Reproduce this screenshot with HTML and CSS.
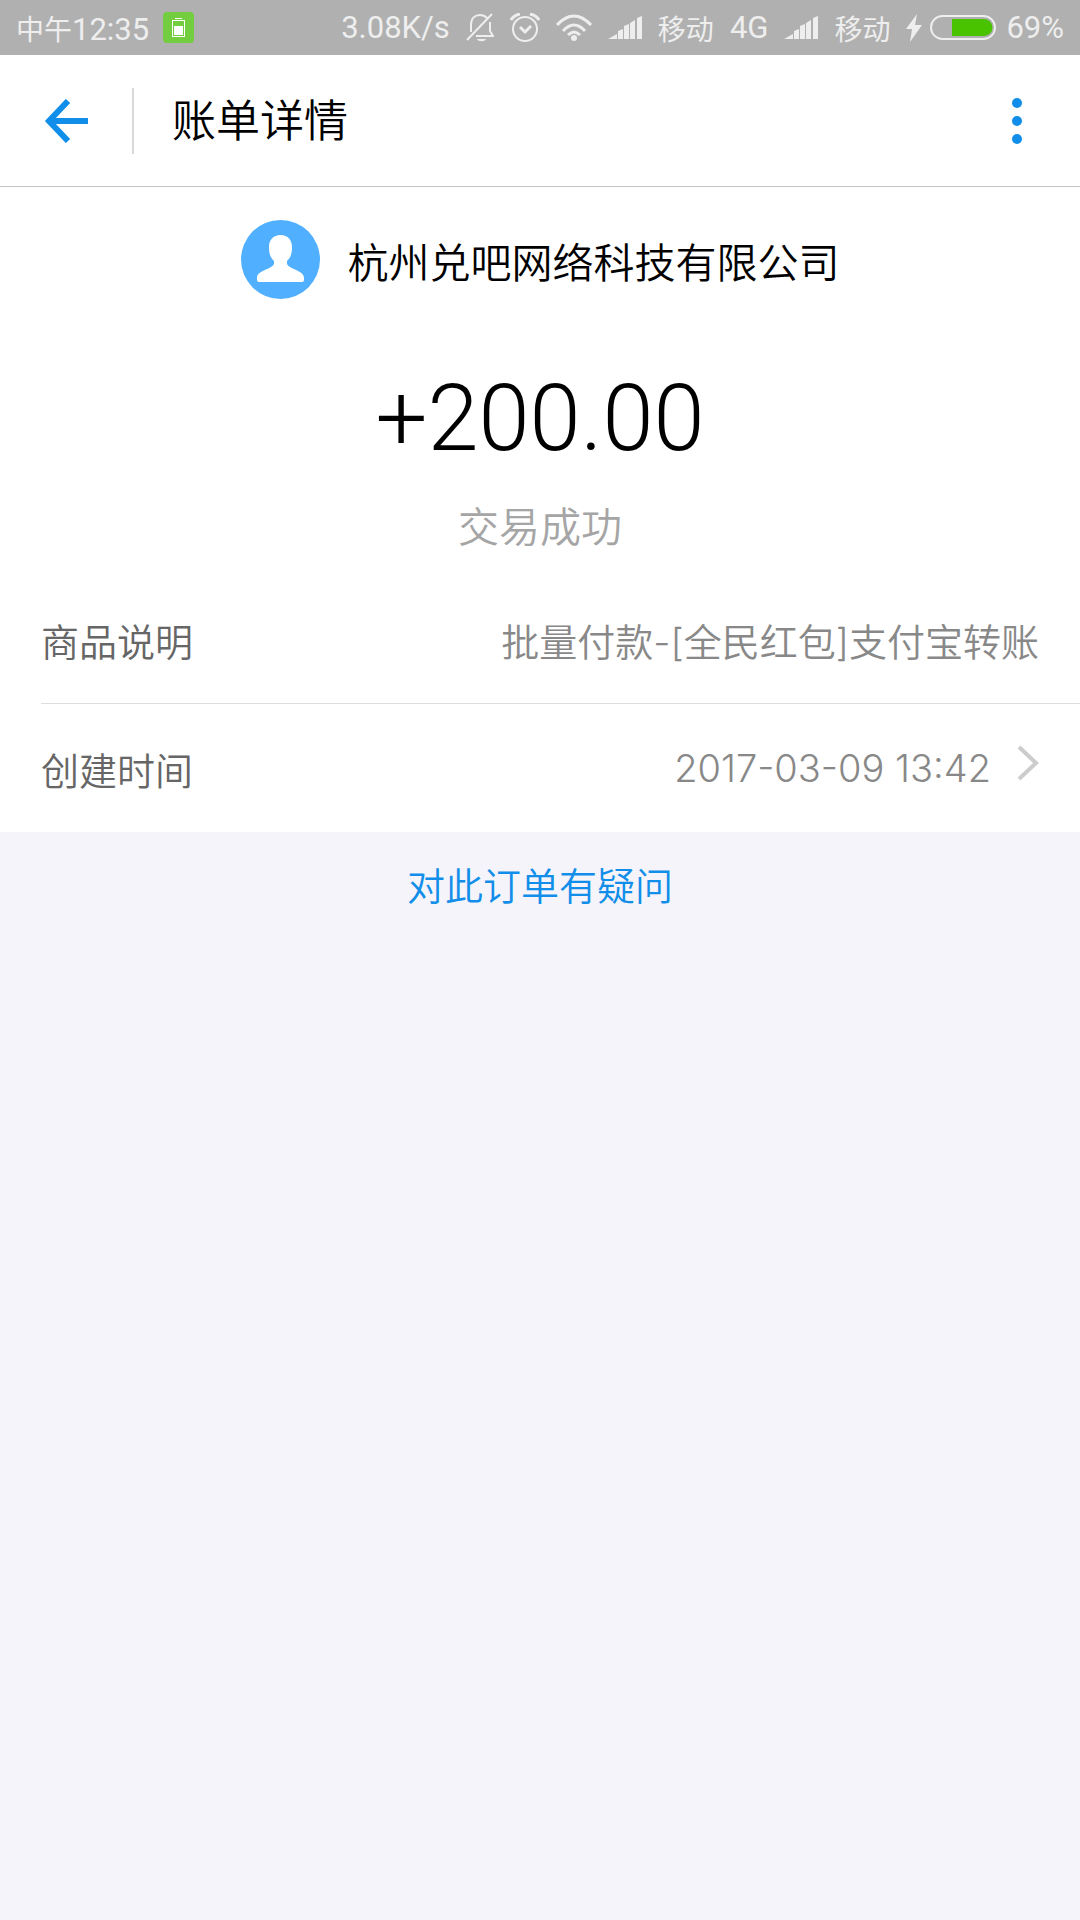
FILE: index.html
```html
<!DOCTYPE html>
<html lang="zh-CN">
  <head>
    <meta charset="UTF-8" />
    <meta name="viewport" content="width=device-width, initial-scale=1.0" />
    <title>账单详情</title>
    <link rel="stylesheet" href="styles.css">
  </head>
  <body>
    <div class="status-bar">
      <div class="status-left">
        <span class="clock"><span class="status-cn">中午</span>12:35</span>
        <svg class="saver" width="31" height="31" viewBox="0 0 31 31">
          <rect width="31" height="31" rx="4" fill="#72ce3e" />
          <path d="M12 6h7v1h-7z" fill="#fff" />
          <rect x="9.5" y="8.5" width="12" height="16" fill="none" stroke="#fff" />
          <path d="M11 14h9v9h-9z" fill="#fff" />
        </svg>
      </div>
      <div class="status-right">
        <span>3.08K/s</span>
        <svg width="28" height="30" viewBox="0 0 28 30" fill="none" stroke="#eee" stroke-width="2">
          <path d="M5 19V12C5 5 9 2 14 2C17 2 19 3 21 5M24 9V18L27 23H10M1 27L26 1" />
          <path d="M11 26h9c-1 3-8 3-9 0z" fill="#eee" stroke="none" />
        </svg>
        <svg width="30" height="30" viewBox="0 0 30 30" fill="none" stroke="#eee">
          <circle cx="15" cy="16" r="12" stroke-width="2" />
          <path d="M10 14l5 5l6-6M1 7Q4 2 10 1M29 7Q26 2 20 1" stroke-width="3" />
        </svg>
        <svg width="36" height="28" viewBox="0 0 36 28" fill="none" stroke="#eee" stroke-width="3">
          <path d="M1 11Q18-7 35 11M7 17Q18 5 29 17M12 21Q18 15 24 21" />
          <circle cx="18" cy="24" r="3" fill="#eee" stroke="none" />
        </svg>
        <svg width="34" height="24" viewBox="0 0 34 24" fill="#eee">
          <path d="M0 23L9 18V23zM10 15L15 13V23H10zM16 10L21 8V23H16zM22 7L27 4V23H22zM29 2L34 0V23H29z" />
        </svg>
        <span class="status-cn">移动</span>
        <span>4G</span>
        <svg width="34" height="24" viewBox="0 0 34 24" fill="#eee">
          <path d="M0 23L9 18V23zM10 15L15 13V23H10zM16 10L21 8V23H16zM22 7L27 4V23H22zM29 2L34 0V23H29z" />
        </svg>
        <span class="status-cn">移动</span>
        <span class="power">
          <svg width="16" height="28" viewBox="0 0 16 28" fill="#eee">
            <path d="M11 0L0 15H6L4 28L16 11H9z" />
          </svg>
          <svg width="66" height="25" viewBox="0 0 66 25">
            <rect x="1" y="1" width="64" height="23" rx="11.5" fill="none" stroke="#eee" stroke-width="2" />
            <path d="M22 4H54A8.5 8.5 0 0 1 54 21H22z" fill="#49c300" />
          </svg>
          <span class="percent">69%</span>
        </span>
      </div>
    </div>

    <header class="title-bar">
      <button class="back" type="button" aria-label="返回">
        <svg width="44" height="44" viewBox="0 0 44 44" fill="none" stroke="#108ee9" stroke-width="6">
          <path d="M44 22H6M24 2L5 22L24 42" />
        </svg>
      </button>
      <h1>账单详情</h1>
      <button class="more" type="button" aria-label="更多">
        <svg width="10" height="46" viewBox="0 0 10 46" fill="#108ee9">
          <circle cx="5" cy="5" r="5" />
          <circle cx="5" cy="23" r="5" />
          <circle cx="5" cy="41" r="5" />
        </svg>
      </button>
    </header>

    <main>
      <section class="summary">
        <div class="payee">
          <svg width="79" height="79" viewBox="0 0 79 79">
            <circle cx="39.5" cy="39.5" r="39.5" fill="#50b0ff" />
            <path d="M39.5 15C47 15 51 20 51 27C51 35 49 38 46 41V44C49 50 63 50 63 58V60Q63 62 61 62H18Q16 62 16 60V58C16 50 30 50 33 44V41C30 38 28 35 28 27C28 20 32 15 39.5 15z" fill="#fff" />
          </svg>
          <span>杭州兑吧网络科技有限公司</span>
        </div>
        <div class="amount">+200.00</div>
        <div class="state">交易成功</div>
      </section>

      <dl class="details">
        <div class="row">
          <dt>商品说明</dt>
          <dd>批量付款-[全民红包]支付宝转账</dd>
        </div>
        <div class="row">
          <dt>创建时间</dt>
          <dd>2017-03-09 13:42</dd>
          <svg class="arrow" width="22" height="46" viewBox="0 0 22 46" fill="none" stroke="#ccc" stroke-width="4">
            <path d="M2 2L19 18L2 34" />
          </svg>
        </div>
      </dl>

      <a class="question" href="#">对此订单有疑问</a>
    </main>
  </body>
</html>
```

FILE: styles.css
```css
* {
  box-sizing: border-box;
}
body {
  margin: 0;
  min-height: 100vh;
  background-color: #f4f4fa;
  color: #000;
  font-family: Inter, "Noto Sans CJK SC", sans-serif;
  font-weight: 350;
}
svg {
  display: block;
  flex: none;
}
button {
  padding: 0;
  border: none;
  background: none;
  cursor: pointer;
}
.status-bar {
  display: flex;
  justify-content: space-between;
  height: 55px;
  padding: 0 16px;
  background-color: #b0b0b0;
  color: #eee;
  font-family: Roboto, "Noto Sans CJK SC", sans-serif;
  font-size: 31px;
  font-weight: 400;
}
.status-left,
.status-right,
.power {
  display: flex;
  align-items: center;
  gap: 16px;
  white-space: nowrap;
}
.status-left {
  gap: 14px;
}
.power {
  gap: 8px;
}
.percent {
  padding-left: 2px;
}
.status-cn {
  font-size: 28px;
}
.title-bar {
  display: flex;
  align-items: center;
  height: 132px;
  background-color: #fff;
  border-bottom: 1px solid #c4c4c8;
}
.back {
  display: flex;
  align-items: center;
  height: 66px;
  padding: 0 44px;
  border-right: 2px solid #d8d8d8;
}
h1 {
  flex: 1;
  margin: 0;
  padding-left: 38px;
  font-size: 44px;
  line-height: 66px;
  font-weight: 350;
}
.more {
  padding: 0 58px;
}
.summary {
  display: flex;
  flex-direction: column;
  align-items: center;
  padding-top: 33px;
  background-color: #fff;
}
.payee {
  display: flex;
  align-items: center;
  gap: 28px;
  font-size: 41px;
}
.amount {
  padding-top: 66px;
  font-family: Roboto, sans-serif;
  font-size: 92px;
  line-height: 108px;
}
.state {
  padding: 24px 0 18px;
  color: #a5a5a5;
  font-size: 41px;
  line-height: 60px;
}
.details {
  margin: 0;
  padding-left: 41px;
  background-color: #fff;
  font-size: 38px;
}
.row {
  display: flex;
  align-items: center;
  height: 128px;
  padding-right: 41px;
}
.row + .row {
  height: 129px;
  border-top: 1px solid #ddd;
}
dt {
  color: #666;
}
dd {
  flex: 1;
  margin: 0;
  color: #888;
  text-align: right;
}
.arrow {
  margin-left: 26px;
}
.question {
  display: block;
  padding-top: 26px;
  color: #108ee9;
  font-size: 38px;
  line-height: 56px;
  text-align: center;
  text-decoration: none;
}
```
